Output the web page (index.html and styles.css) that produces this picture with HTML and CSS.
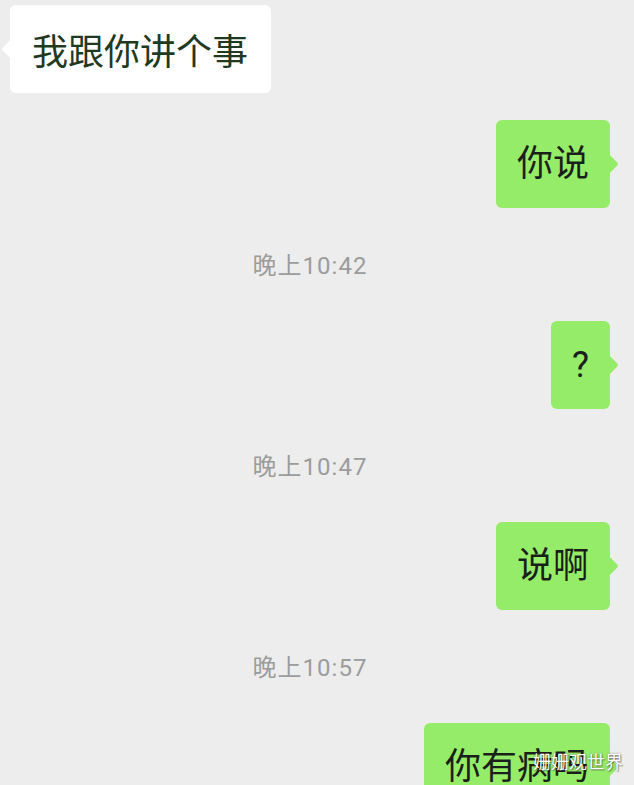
FILE: index.html
```html
<!DOCTYPE html>
<html lang="zh-CN">
<head>
  <meta charset="UTF-8" />
  <meta name="viewport" content="width=device-width, initial-scale=1.0"/>
  <title>聊天</title>
  <link rel="stylesheet" href="styles.css">
</head>
<body>
  <div class="chat">
    <div class="row left">
      <div class="bubble white">我跟你讲个事</div>
    </div>

    <div class="row right first-right">
      <div class="bubble green">你说</div>
    </div>

    <div class="time">晚上10:42</div>

    <div class="row right">
      <div class="bubble green">?</div>
    </div>

    <div class="time">晚上10:47</div>

    <div class="row right">
      <div class="bubble green">说啊</div>
    </div>

    <div class="time">晚上10:57</div>

    <div class="row right">
      <div class="bubble green">你有病吗</div>
    </div>
  </div>

  <div class="watermark">姗姗观世界</div>
</body>
</html>
```

FILE: styles.css
```css
body {
  margin: 0;
  height: 785px;
  overflow: hidden;
  background: #ededed;
  font-family: Roboto, "Noto Sans CJK SC", sans-serif;
  position: relative;
}

.chat {
  padding: 5px 24px 0 10px;
}

.row {
  display: flex;
}

.row.right {
  justify-content: flex-end;
}

.first-right {
  margin-top: 27px;
}

.bubble {
  position: relative;
  font-family: "Noto Sans CJK SC", sans-serif;
  font-size: 36px;
  line-height: 48px;
  padding: 20px 21px 20px 21px;
  border-radius: 6px;
}

.bubble.white {
  background: #ffffff;
  color: #1f3a1f;
  padding: 20px 23px 20px 22px;
}

.bubble.green {
  background: #95ec69;
  color: #1b1f1a;
  font-family: Roboto, "Noto Sans CJK SC", sans-serif;
}

.bubble::after {
  content: "";
  position: absolute;
  top: 37px;
  width: 14px;
  height: 14px;
  border-radius: 3px;
  transform: rotate(45deg);
}

.bubble.white::after {
  left: -6px;
  background: #ffffff;
}

.bubble.green::after {
  right: -6px;
  background: #95ec69;
}

.time {
  text-align: center;
  margin: 46px 0 43px;
  font-size: 24px;
  line-height: 24px;
  letter-spacing: 1px;
  color: #9c9c9c;
}

.watermark {
  position: absolute;
  right: 11px;
  top: 748px;
  font-family: "Noto Sans CJK SC", sans-serif;
  font-size: 18px;
  line-height: 26px;
  color: #ffffff;
  text-shadow: 0 0 2px #00000077, 1px 1px 1px #00000055;
}
```
